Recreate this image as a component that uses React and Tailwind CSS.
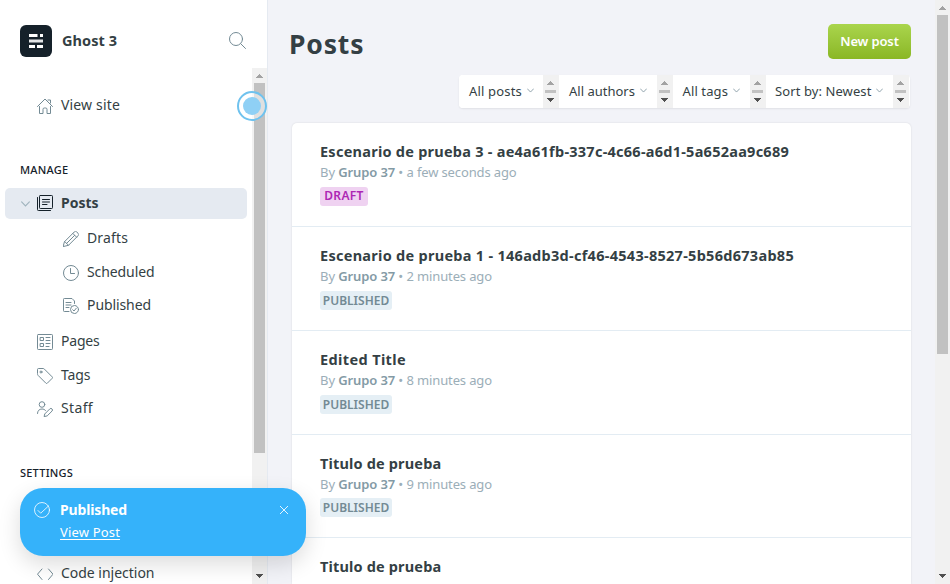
import React from "react";

function Icon({ children, className = "text-[#738a94]", width = 16, box = "0 0 16 16" }) {
  return (
    <svg
      width={width}
      height={width}
      viewBox={box}
      fill="none"
      stroke="currentColor"
      strokeWidth="1"
      strokeLinecap="round"
      strokeLinejoin="round"
      className={`shrink-0 ${className}`}
    >
      {children}
    </svg>
  );
}

const HomeIcon = () => (
  <Icon>
    <path d="M.5 8.5 8 1l7.500 7.500M2.500 8.500v7H6v-4.200a1.300 1.300 0 0 1 1.300-1.300h1.400a1.300 1.300 0 0 1 1.300 1.300v4.200h3.500v-7M11 2h2.500v3" />
  </Icon>
);
const PostsIcon = () => (
  <Icon className="text-[#15212a]">
    <rect x="2.5" y=".5" width="13" height="13" rx=".8" />
    <path d="M.5 2.500V14.700a.8.8 0 0 0 .8.8H13.500M5.500 4.500h7M5.500 7h7M5.500 9.500h4.500" />
  </Icon>
);
const PencilIcon = () => (
  <Icon>
    <path d="M1.700 10.500 11.200 1a1.800 1.800 0 0 1 2.600 0L15 2.200a1.800 1.800 0 0 1 0 2.600L5.500 14.300.5 15.500ZM1.700 10.500l3.800 3.800M9.800 2.400l3.800 3.800M3.600 12.400l8.100-8.100" />
  </Icon>
);
const ClockIcon = () => (
  <Icon>
    <circle cx="8" cy="8" r="7.500" />
    <path d="M7.500 3.500V8.500h4" />
  </Icon>
);
const PublishedIcon = () => (
  <Icon>
    <path d="M6 13.500H1.300a.8.8 0 0 1-.8-.8V1.300a.8.800 0 0 1 .8-.8h7.700l2.500 2.500v2.500M3 4.500h5M3 7h5M3 9.500h3" />
    <circle cx="11.500" cy="11.500" r="4" />
    <path d="m9.700 11.700 1.300 1.300 2.300-2.800" />
  </Icon>
);
const PagesIcon = () => (
  <Icon>
    <rect x=".5" y=".5" width="15" height="15" rx=".8" />
    <path d="M3.500 3.500h3v3h-3zM3.500 9.500h3v3h-3zM9 3.500h4M9 6.500h4M9 9.500h4M9 12.500h3" />
  </Icon>
);
const TagIcon = () => (
  <Icon>
    <path d="M.5 1.300a.8.8 0 0 1 .8-.8H6a2 2 0 0 1 1.400.6l7.800 7.800a1 1 0 0 1 0 1.400l-4.900 4.900a1 1 0 0 1-1.400 0L1.100 7.400A2 2 0 0 1 .5 6Z" />
    <circle cx="4" cy="4" r="1" />
  </Icon>
);
const StaffIcon = () => (
  <Icon>
    <circle cx="5" cy="3.500" r="2.800" />
    <path d="M.5 12.500C.5 9.700 2.300 8 5 8c1.500 0 2.700.5 3.500 1.500M8 12.700l4.800-4.800a1.400 1.400 0 0 1 2.200 2.200L10.200 14.900 7.500 15.500Z" />
  </Icon>
);
const CodeIcon = () => (
  <Icon>
    <path d="M5 3 .5 8.200 5 13.500M11.500 3 16 8.200l-4.500 5.300" />
  </Icon>
);

function Chevron({ className }) {
  return (
    <svg viewBox="0 0 10 6" fill="none" stroke="currentColor" strokeWidth="1.200" strokeLinecap="round" className={`shrink-0 ${className}`}>
      <path d="M.7.7 5 5.200 9.300.7" />
    </svg>
  );
}

function ArrowUp() {
  return (
    <svg width="7" height="4" viewBox="0 0 7 4" fill="#a3a3a3" shapeRendering="crispEdges" className="block shrink-0">
      <path d="M3 0h1v1h1v1h1v1h1v1H0V3h1V2h1V1h1z" />
    </svg>
  );
}
function ArrowDown() {
  return (
    <svg width="7" height="4" viewBox="0 0 7 4" fill="#505050" shapeRendering="crispEdges" className="block shrink-0">
      <path d="M0 0h7v1H6v1H5v1H4v1H3V3H2V2H1V1H0z" />
    </svg>
  );
}

function NavItem({ icon, label, className, tracking }) {
  return (
    <div className={`flex items-center gap-2 text-[14px] leading-5 text-[#343f44] ${className}`}>
      {icon}
      <span className={`relative -top-px whitespace-nowrap ${tracking}`}>{label}</span>
    </div>
  );
}

function Sidebar() {
  return (
    <aside className="flex h-full w-[268px] shrink-0 flex-col border-r border-[#e5eaf1] bg-white">
      <div className="flex h-[68px] shrink-0 items-center pt-[14px] pr-[21px] pl-5">
        <svg width="32" height="32" viewBox="0 0 32 32" className="shrink-0">
          <rect width="32" height="32" rx="6" fill="#15212a" />
          <path d="M9 9h8.500v3H9zM20 9h3v3h-3zM9 20h6v3H9zM17 20h6v3h-6z" fill="#fff" />
          <path d="M9 14.500h14v3H9z" fill="#e2e4e6" />
        </svg>
        <span className="ml-[10px] flex-1 text-[14.5px] font-bold tracking-[0.05px] text-[#343f44]">Ghost 3</span>
        <Icon width={17} box="0 0 17 17" className="relative -top-px text-[#738a94]">
          <circle cx="7" cy="7" r="6.500" />
          <path d="m11.800 11.800 4.700 4.700" />
        </Icon>
      </div>
      <div className="flex min-h-0 flex-1">
        <nav className="flex min-w-0 flex-1 flex-col">
          <NavItem icon={<HomeIcon />} label="View site" tracking="tracking-[0.16px]" className="mt-5 h-9 shrink-0 pl-[37px]" />
          <h4 className="mt-9 h-5 shrink-0 pl-5 text-[11px] leading-5 font-medium tracking-[0.26px] text-[#15212a]">MANAGE</h4>
          <div className="mt-2 mr-[5px] ml-[5px] flex h-[31px] shrink-0 items-center rounded-[5px] bg-[#e5eaf1] pl-4">
            <Chevron className="h-[6px] w-[9px] text-[#9fb3bd]" />
            <span className="relative -top-px ml-[7px] flex"><PostsIcon /></span>
            <span className="relative -top-px ml-2 text-[14px] font-bold text-[#343f44]">Posts</span>
          </div>
          <NavItem icon={<PencilIcon />} label="Drafts" tracking="tracking-[0.14px]" className="mt-[3px] h-[34px] shrink-0 pl-[63px]" />
          <NavItem icon={<ClockIcon />} label="Scheduled" tracking="tracking-[-0.09px]" className="h-[34px] shrink-0 pl-[63px]" />
          <NavItem icon={<PublishedIcon />} label="Published" tracking="tracking-[-0.09px]" className="h-8 shrink-0 pl-[63px]" />
          <NavItem icon={<PagesIcon />} label="Pages" tracking="tracking-[-0.2px]" className="mt-[3px] h-[34px] shrink-0 pl-[37px]" />
          <NavItem icon={<TagIcon />} label="Tags" tracking="tracking-[-0.09px]" className="h-[34px] shrink-0 pl-[37px]" />
          <NavItem icon={<StaffIcon />} label="Staff" tracking="tracking-[0.35px]" className="h-8 shrink-0 pl-[37px]" />
          <h4 className="mt-[38px] h-5 shrink-0 pl-5 text-[11px] leading-5 font-medium tracking-[0.22px] text-[#15212a]">SETTINGS</h4>
          <NavItem icon={<CodeIcon />} label="Code injection" tracking="tracking-[-0.02px]" className="mt-[74px] h-[34px] shrink-0 pl-[37px]" />
        </nav>
        <div className="flex w-[15px] shrink-0 flex-col items-center bg-[#f1f1f1]">
          <div className="flex h-[15px] items-center pt-px"><ArrowUp /></div>
          <div className="h-[370px] w-[11px] bg-[#c1c1c1]" />
          <div className="mt-auto flex h-[17px] items-center"><ArrowDown /></div>
        </div>
      </div>
    </aside>
  );
}

const filters = [
  { label: "All posts", width: "w-[84px] rounded-l-[4px] pl-[10px]", tracking: "tracking-[0.17px]" },
  { label: "All authors", width: "w-[98px] pl-[10px]", tracking: "tracking-[0px]" },
  { label: "All tags", width: "w-[77px] pl-[9.500px]", tracking: "tracking-[0.11px]" },
  { label: "Sort by: Newest", width: "w-[127px] pl-[9px]", tracking: "tracking-[0.09px]" },
];

function Filters() {
  return (
    <div className="mr-10 flex h-[33px] self-end rounded-[4px] bg-white pr-px shadow-[0_1px_2px_rgba(0,0,0,0.08)]">
      {filters.map((f) => (
        <div key={f.label} className="flex">
          <div className={`flex items-center bg-white text-[13px] text-[#343f44] ${f.width}`}>
            <span className={`whitespace-nowrap ${f.tracking}`}>{f.label}</span>
            <Chevron className="relative -top-px ml-[5px] h-[5px] w-[7px] text-[#8095a0]" />
          </div>
          <div className="flex w-4 flex-col bg-[#f1f1f1] pt-[6px] pl-[2px]">
            <div className="ml-[2px]"><ArrowUp /></div>
            <div className="mt-[5px] h-[3px] w-[11px] bg-[#c1c1c1]" />
            <div className="mt-[5px] ml-[2px]"><ArrowDown /></div>
          </div>
        </div>
      ))}
    </div>
  );
}

const posts = [
  { title: "Escenario de prueba 3 - ae4a61fb-337c-4c66-a6d1-5a652aa9c689", spacing: "tracking-[0.25px]", time: "a few seconds ago", status: "DRAFT", height: "h-[104px]", byline: "mt-0 mb-[5px]" },
  { title: "Escenario de prueba 1 - 146adb3d-cf46-4543-8527-5b56d673ab85", spacing: "tracking-[0.28px]", time: "2 minutes ago", status: "PUBLISHED", height: "h-[104px]", byline: "mt-0 mb-[5px]" },
  { title: "Edited Title", spacing: "tracking-[0.38px]", time: "8 minutes ago", status: "PUBLISHED", height: "h-[104px]", byline: "mt-0 mb-[5px]" },
  { title: "Titulo de prueba", spacing: "tracking-[0.16px]", time: "9 minutes ago", status: "PUBLISHED", height: "h-[103px]", byline: "mt-0 mb-1" },
  { title: "Titulo de prueba", spacing: "tracking-[0.16px]", time: "10 minutes ago", status: "PUBLISHED", height: "h-[104px]", byline: "mt-[2px] mb-1" },
];

function PostRow({ post }) {
  const badge =
    post.status === "DRAFT"
      ? "w-12 bg-[#efd2f1] pb-px text-[#ad26b4] tracking-[0.33px]"
      : "w-[72px] bg-[#e5eff5] text-[#738a94] tracking-[0px]";
  return (
    <li className={`shrink-0 border-b border-[#e3ecf3] pt-[17px] pl-7 ${post.height}`}>
      <h3 className={`h-[22px] text-[14.5px] leading-[22px] font-bold whitespace-nowrap text-[#343f44] ${post.spacing}`}>{post.title}</h3>
      <p className={`h-5 text-[13px] leading-5 whitespace-pre text-[#9baeb8] ${post.byline}`}>
        <span className="tracking-[-0.05px]">By </span>
        <span className="font-semibold tracking-[-0.14px] text-[#839aa5]">Grupo 37</span>
        <span className="tracking-[-0.05px]"> • </span>
        <span className="tracking-[-0.13px]">{post.time}</span>
      </p>
      <span className={`flex h-[19px] items-center justify-center rounded-[3px] text-[12px] leading-none font-semibold ${badge}`}>
        {post.status}
      </span>
    </li>
  );
}

function Toast() {
  return (
    <div className="absolute top-[488px] left-5 flex h-[68px] w-[286px] items-start rounded-[23px] bg-[#35b2fa] pt-3 pr-[17px] pl-[14px] text-white shadow-[0_8px_22px_rgba(0,0,0,0.14)]">
      <Icon className="mt-[2px] text-white/80">
        <circle cx="8" cy="8" r="7.500" />
        <path d="m4 8.500 2.700 2.700L14.500 4" />
      </Icon>
      <div className="ml-[10px] flex-1">
        <div className="h-5 text-[14px] leading-5 font-bold tracking-[-0.15px]">Published</div>
        <div className="mt-[3px] text-[13px] leading-[18px] tracking-[0.17px] underline underline-offset-2">View Post</div>
      </div>
      <svg width="10" height="10" viewBox="0 0 10 10" stroke="#fff" strokeOpacity=".85" className="mt-[5px]">
        <path d="m1 1 8 8M9 1 1 9" />
      </svg>
    </div>
  );
}

export default function App() {
  return (
    <div className="relative flex h-[584px] w-[950px] overflow-hidden bg-[#f2f3f8] font-['Noto_Sans',sans-serif]">
      <Sidebar />
      <main className="flex min-w-0 flex-1 flex-col">
        <header className="flex h-[75px] shrink-0 items-start justify-between pr-6 pl-[21px]">
          <h1 className="mt-[26px] text-[26.5px] leading-9 font-bold tracking-[0.85px] text-[#343f44]">Posts</h1>
          <div className="mt-6 flex h-[35px] w-[83px] items-center justify-center rounded-[5px] bg-linear-to-b from-[#aad54c] to-[#8ab724] text-[13px] font-semibold tracking-[-0.14px] text-white">
            New post
          </div>
        </header>
        <div className="-mr-[15px] flex shrink-0 flex-col"><Filters /></div>
        <ul className="mt-[15px] mr-6 ml-6 flex min-h-0 flex-1 flex-col rounded-t-[5px] bg-white shadow-[0_0_2px_rgba(0,0,0,0.12)]">
          {posts.map((p, i) => <PostRow key={i} post={p} />)}
        </ul>
      </main>
      <div className="flex w-[15px] shrink-0 flex-col items-center bg-[#f1f1f1]">
        <div className="flex h-[15px] items-center"><ArrowUp /></div>
        <div className="h-[339px] w-[11px] bg-[#c1c1c1]" />
        <div className="mt-auto flex h-[17px] items-center"><ArrowDown /></div>
      </div>
      <div className="absolute top-[91px] left-[237px] flex h-[30px] w-[30px] items-center justify-center rounded-full border-2 border-[#6fc2ee] bg-white/50">
        <div className="h-[18px] w-[18px] rounded-full bg-[#8fd0f5]" />
      </div>
      <Toast />
    </div>
  );
}
